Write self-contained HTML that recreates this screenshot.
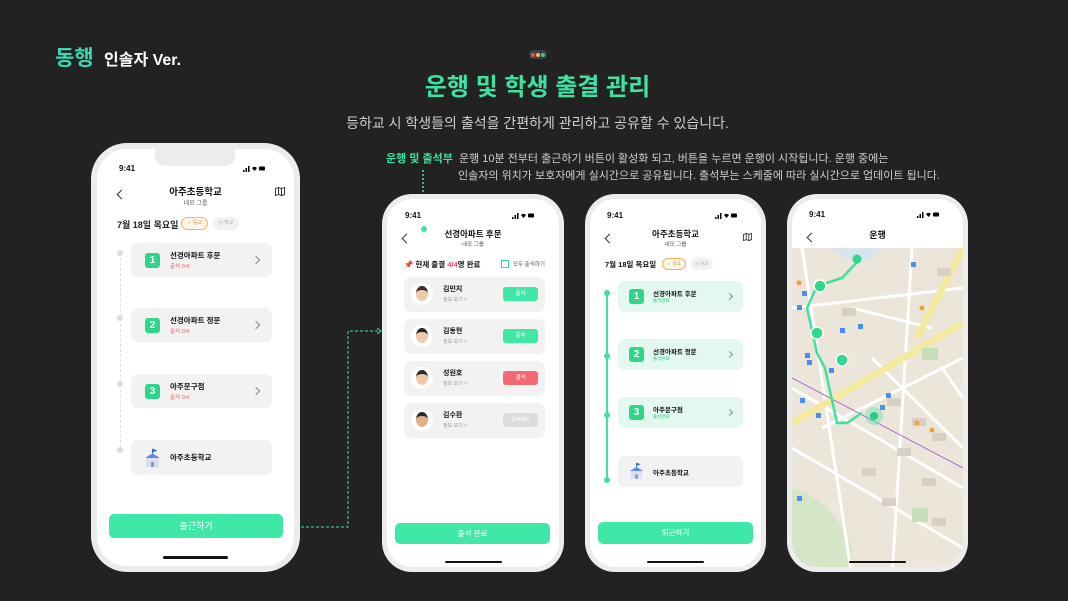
<!DOCTYPE html>
<html><head><meta charset="utf-8">
<style>
*{margin:0;padding:0;box-sizing:border-box}
body{width:1068px;height:601px;background:#222222;font-family:"Liberation Sans","Noto Sans CJK KR",sans-serif;position:relative;overflow:hidden;color:#111}
.abs{position:absolute}
.phone{position:absolute;background:#ececec;border-radius:30px;padding:5px}
.scr{position:relative;width:100%;height:100%;background:#fff;border-radius:25px;overflow:hidden}
.t{position:absolute;white-space:nowrap}
.card{position:absolute;background:#f2f2f2;border-radius:7px}
.num{position:absolute;width:15px;height:15px;border-radius:3px;background:#2fd68a;color:#fff;font-size:10px;font-weight:bold;text-align:center;line-height:15px}
.chev{position:absolute;width:6px;height:6px;border-right:1.2px solid #888;border-top:1.2px solid #888;transform:rotate(45deg)}
.back{position:absolute;width:7px;height:7px;border-left:1.3px solid #333;border-bottom:1.3px solid #333;transform:rotate(45deg)}
.btn{position:absolute;background:#40e8a8;border-radius:5px;color:#fff;text-align:center}
.home{position:absolute;height:3px;background:#111;border-radius:2px}
.status{position:absolute;font-size:8px;font-weight:bold}
.sig{position:absolute;width:22px;height:7px}
</style></head><body>

<div class="t" style="left:55px;top:42px;font-size:21px;font-weight:bold;color:#3fd6b4;">동행</div>
<div class="t" style="left:104px;top:46px;font-size:16px;font-weight:bold;color:#fff;">인솔자 Ver.</div>

<div class="abs" style="left:529px;top:50px;width:18px;height:9px;background:#3a3f48;border-radius:4px"></div>
<div class="abs" style="left:531px;top:52.5px;width:4px;height:4px;background:#e84c4c;border-radius:50%"></div>
<div class="abs" style="left:536px;top:52.5px;width:4px;height:4px;background:#f0c040;border-radius:50%"></div>
<div class="abs" style="left:541px;top:52.5px;width:4px;height:4px;background:#40d080;border-radius:50%"></div>

<div class="t" style="left:0;width:1075px;text-align:center;top:67px;font-size:24px;font-weight:bold;color:#3fe3a0;">운행 및 학생 출결 관리</div>
<div class="t" style="left:0;width:1075px;text-align:center;top:113px;font-size:14px;color:#cfcfcf;">등하교 시 학생들의 출석을 간편하게 관리하고 공유할 수 있습니다.</div>
<div class="t" style="left:386px;top:150px;font-size:11px;color:#cfcfcf;"><b style="color:#3fe3a0">운행 및 출석부</b>&nbsp; 운행 10분 전부터 출근하기 버튼이 활성화 되고, 버튼을 누르면 운행이 시작됩니다. 운행 중에는</div>
<div class="t" style="left:458px;top:167px;font-size:11px;color:#cfcfcf;">인솔자의 위치가 보호자에게 실시간으로 공유됩니다. 출석부는 스케줄에 따라 실시간으로 업데이트 됩니다.</div>

<!-- connectors -->
<svg class="abs" style="left:0;top:0" width="1068" height="601">
<path d="M286 527 H348 V331 H380" fill="none" stroke="#3fe3a0" stroke-width="1" stroke-dasharray="3 2"/>
<path d="M377 328 L381 331 L377 334" fill="none" stroke="#3fe3a0" stroke-width="1"/>
<path d="M423 170 V229" fill="none" stroke="#3fe3a0" stroke-width="1.5" stroke-dasharray="2 2"/>
</svg>

<!-- PHONE 1 -->
<div class="phone" style="left:91px;top:143px;width:209px;height:429px;border-radius:36px;padding:6px">
<div class="scr" style="border-radius:30px">
 <div class="abs" style="left:58px;top:0;width:80px;height:17px;background:#ececec;border-radius:0 0 10px 10px"></div>
 <div class="status" style="left:22px;top:15px">9:41</div>
 <svg class="sig" style="left:146px;top:16px" viewBox="0 0 22 7"><rect x="0" y="5" width="1.5" height="2"/><rect x="2.5" y="3" width="1.5" height="4"/><rect x="5" y="1" width="1.5" height="6"/><path d="M9 3 Q11.5 0.5 14 3 L11.5 6Z"/><rect x="16" y="1.5" width="6" height="4" rx="1"/></svg>
 <div class="back" style="left:21px;top:42px"></div>
 <div class="t" style="left:0;width:197px;text-align:center;top:35px;font-size:9.5px;font-weight:bold">아주초등학교</div>
 <div class="t" style="left:0;width:197px;text-align:center;top:49px;font-size:6px;color:#555">네모 그룹</div>
 <svg class="abs" style="left:178px;top:38px" width="10" height="9" viewBox="0 0 10 9"><path d="M0.5 1.5 L3.5 0.5 L6.5 1.5 L9.5 0.5 V7.5 L6.5 8.5 L3.5 7.5 L0.5 8.5Z M3.5 0.5V7.5 M6.5 1.5V8.5" fill="none" stroke="#222" stroke-width="0.9"/></svg>
 <div class="t" style="left:20px;top:69px;font-size:9px;font-weight:bold;color:#222">7월 18일 목요일</div>
 <div class="abs" style="left:84px;top:68px;width:27px;height:13px;border:1px solid #f0b060;border-radius:7px;background:#fff5e8;font-size:5px;color:#e09030;text-align:center;line-height:11px">☼ 등교</div>
 <div class="abs" style="left:116px;top:68px;width:26px;height:13px;border-radius:7px;background:#f2f2f2;font-size:5px;color:#aaa;text-align:center;line-height:13px">◷ 하교</div>
 <div class="abs" style="left:23px;top:104px;height:200px;border-left:1px dashed #ddd"></div>
 <div class="abs" style="left:20px;top:101px;width:6px;height:6px;border-radius:50%;background:#ddd"></div>
 <div class="abs" style="left:20px;top:166px;width:6px;height:6px;border-radius:50%;background:#ddd"></div>
 <div class="abs" style="left:20px;top:232px;width:6px;height:6px;border-radius:50%;background:#ddd"></div>
 <div class="abs" style="left:20px;top:298px;width:6px;height:6px;border-radius:50%;background:#ddd"></div>
 <div class="card" style="left:34px;top:94px;width:141px;height:34px"><div class="num" style="left:14px;top:10px">1</div><div class="t" style="left:39px;top:7px;font-size:7.5px;font-weight:bold">선경아파트 후문</div><div class="t" style="left:39px;top:19px;font-size:5.5px;color:#f06070">출석 0/4</div><div class="chev" style="left:122px;top:14px"></div></div>
 <div class="card" style="left:34px;top:159px;width:141px;height:34px"><div class="num" style="left:14px;top:10px">2</div><div class="t" style="left:39px;top:7px;font-size:7.5px;font-weight:bold">선경아파트 정문</div><div class="t" style="left:39px;top:19px;font-size:5.5px;color:#f06070">출석 0/4</div><div class="chev" style="left:122px;top:14px"></div></div>
 <div class="card" style="left:34px;top:225px;width:141px;height:34px"><div class="num" style="left:14px;top:10px">3</div><div class="t" style="left:39px;top:7px;font-size:7.5px;font-weight:bold">아주문구점</div><div class="t" style="left:39px;top:19px;font-size:5.5px;color:#f06070">출석 0/4</div><div class="chev" style="left:122px;top:14px"></div></div>
 <div class="card" style="left:34px;top:291px;width:141px;height:35px">
  <svg class="abs" style="left:13px;top:8px" width="17" height="19" viewBox="0 0 17 19"><path d="M8.5 1V6 M8.5 1 L12 2.5 L8.5 4" stroke="#3a6fd8" fill="#3a6fd8" stroke-width="1"/><path d="M1 10 L8.5 5.5 L16 10Z" fill="#5a8ae8"/><rect x="2" y="10" width="13" height="9" fill="#d8e0f0"/><rect x="7" y="14" width="3" height="5" fill="#8899bb"/></svg>
  <div class="t" style="left:39px;top:12px;font-size:7.5px;font-weight:bold">아주초등학교</div></div>
 <div class="btn" style="left:12px;top:365px;width:174px;height:24px;font-size:9px;line-height:24px">출근하기</div>
 <div class="home" style="left:66px;top:407px;width:65px"></div>
</div></div>

<!-- PHONE 2 -->
<div class="phone" style="left:382px;top:194px;width:182px;height:378px">
<div class="scr">
 <div class="status" style="left:18px;top:12px">9:41</div>
 <svg class="sig" style="left:125px;top:13px" viewBox="0 0 22 7"><rect x="0" y="5" width="1.5" height="2"/><rect x="2.5" y="3" width="1.5" height="4"/><rect x="5" y="1" width="1.5" height="6"/><path d="M9 3 Q11.5 0.5 14 3 L11.5 6Z"/><rect x="16" y="1.5" width="6" height="4" rx="1"/></svg>
 <div class="abs" style="left:34px;top:27px;width:6px;height:6px;border-radius:50%;background:#3fe3a0"></div>
 <div class="back" style="left:16px;top:36px"></div>
 <div class="t" style="left:0;width:172px;text-align:center;top:29px;font-size:8.5px;font-weight:bold">선경아파트 후문</div>
 <div class="t" style="left:0;width:172px;text-align:center;top:41px;font-size:5.5px;color:#555">네모 그룹</div>
 <div class="t" style="left:17px;top:60px;font-size:7.5px;font-weight:bold">📌 현재 출결 <span style="color:#f05060">4/4</span>명 완료</div>
 <div class="abs" style="left:114px;top:61px;width:8px;height:8px;border:1px solid #3fd0a0"></div>
 <div class="t" style="left:126px;top:61px;font-size:5.5px;color:#555">모두 출석하기</div>
 <div class="card" style="left:17px;top:78px;width:141px;height:35px"><div class="abs" style="left:7px;top:6px;width:22px;height:22px;border-radius:50%;background:#fff"><div class="abs" style="left:5px;top:3px;width:12px;height:15px;border-radius:50%;background:#f0c8a8;border-top:4px solid #3a2a20"></div></div><div class="t" style="left:39px;top:7px;font-size:7px;font-weight:bold">김민지</div><div class="t" style="left:39px;top:19px;font-size:5px;color:#999">정보 보기 &gt;</div><div class="btn" style="left:99px;top:10px;width:35px;height:14px;font-size:5.5px;line-height:14px;border-radius:3px">출석</div></div>
 <div class="card" style="left:17px;top:120px;width:141px;height:35px"><div class="abs" style="left:7px;top:6px;width:22px;height:22px;border-radius:50%;background:#fff"><div class="abs" style="left:5px;top:3px;width:12px;height:15px;border-radius:50%;background:#f0c8a8;border-top:4px solid #2a2a20"></div></div><div class="t" style="left:39px;top:7px;font-size:7px;font-weight:bold">김동현</div><div class="t" style="left:39px;top:19px;font-size:5px;color:#999">정보 보기 &gt;</div><div class="btn" style="left:99px;top:10px;width:35px;height:14px;font-size:5.5px;line-height:14px;border-radius:3px">출석</div></div>
 <div class="card" style="left:17px;top:162px;width:141px;height:35px"><div class="abs" style="left:7px;top:6px;width:22px;height:22px;border-radius:50%;background:#fff"><div class="abs" style="left:5px;top:3px;width:12px;height:15px;border-radius:50%;background:#f0c8a8;border-top:4px solid #2a2a20"></div></div><div class="t" style="left:39px;top:7px;font-size:7px;font-weight:bold">성원호</div><div class="t" style="left:39px;top:19px;font-size:5px;color:#999">정보 보기 &gt;</div><div class="btn" style="left:99px;top:10px;width:35px;height:14px;font-size:5.5px;line-height:14px;border-radius:3px;background:#f36a72">결석</div></div>
 <div class="card" style="left:17px;top:204px;width:141px;height:35px"><div class="abs" style="left:7px;top:6px;width:22px;height:22px;border-radius:50%;background:#fff"><div class="abs" style="left:5px;top:3px;width:12px;height:15px;border-radius:50%;background:#e0b088;border-top:4px solid #2a2a20"></div></div><div class="t" style="left:39px;top:7px;font-size:7px;font-weight:bold">김수환</div><div class="t" style="left:39px;top:19px;font-size:5px;color:#999">정보 보기 &gt;</div><div class="btn" style="left:99px;top:10px;width:35px;height:14px;font-size:5px;line-height:14px;border-radius:3px;background:#dcdcdc">결석해요</div></div>
 <div class="btn" style="left:8px;top:324px;width:155px;height:21px;font-size:7.5px;line-height:21px">출석 완료</div>
 <div class="home" style="left:58px;top:362px;width:57px;height:2px"></div>
</div></div>

<!-- PHONE 3 -->
<div class="phone" style="left:585px;top:194px;width:181px;height:378px">
<div class="scr">
 <div class="status" style="left:17px;top:12px">9:41</div>
 <svg class="sig" style="left:125px;top:13px" viewBox="0 0 22 7"><rect x="0" y="5" width="1.5" height="2"/><rect x="2.5" y="3" width="1.5" height="4"/><rect x="5" y="1" width="1.5" height="6"/><path d="M9 3 Q11.5 0.5 14 3 L11.5 6Z"/><rect x="16" y="1.5" width="6" height="4" rx="1"/></svg>
 <div class="back" style="left:16px;top:36px"></div>
 <div class="t" style="left:0;width:171px;text-align:center;top:29px;font-size:8.5px;font-weight:bold">아주초등학교</div>
 <div class="t" style="left:0;width:171px;text-align:center;top:41px;font-size:5.5px;color:#555">네모 그룹</div>
 <svg class="abs" style="left:153px;top:34px" width="9" height="8" viewBox="0 0 10 9"><path d="M0.5 1.5 L3.5 0.5 L6.5 1.5 L9.5 0.5 V7.5 L6.5 8.5 L3.5 7.5 L0.5 8.5Z M3.5 0.5V7.5 M6.5 1.5V8.5" fill="none" stroke="#222" stroke-width="0.9"/></svg>
 <div class="t" style="left:15px;top:60px;font-size:7.5px;font-weight:bold">7월 18일 목요일</div>
 <div class="abs" style="left:72px;top:59px;width:24px;height:12px;border:1px solid #f0b060;border-radius:6px;background:#fff5e8;font-size:4.5px;color:#e09030;text-align:center;line-height:10px">☼ 등교</div>
 <div class="abs" style="left:100px;top:59px;width:23px;height:12px;border-radius:6px;background:#f2f2f2;font-size:4.5px;color:#aaa;text-align:center;line-height:12px">◷ 하교</div>
 <div class="abs" style="left:16px;top:93px;width:2px;height:189px;background:#40e0a0"></div>
 <div class="abs" style="left:14px;top:91px;width:6px;height:6px;border-radius:50%;background:#40e0a0"></div>
 <div class="abs" style="left:14px;top:154px;width:6px;height:6px;border-radius:50%;background:#40e0a0"></div>
 <div class="abs" style="left:14px;top:213px;width:6px;height:6px;border-radius:50%;background:#40e0a0"></div>
 <div class="abs" style="left:14px;top:278px;width:6px;height:6px;border-radius:50%;background:#40e0a0"></div>
 <div class="card" style="left:28px;top:82px;width:125px;height:31px;background:#e3f9f0"><div class="num" style="left:11px;top:8px">1</div><div class="t" style="left:35px;top:7px;font-size:6.5px;font-weight:bold">선경아파트 후문</div><div class="t" style="left:35px;top:17px;font-size:4.5px;color:#30c080">출석완료</div><div class="chev" style="left:109px;top:13px;width:5px;height:5px"></div></div>
 <div class="card" style="left:28px;top:140px;width:125px;height:31px;background:#e3f9f0"><div class="num" style="left:11px;top:8px">2</div><div class="t" style="left:35px;top:7px;font-size:6.5px;font-weight:bold">선경아파트 정문</div><div class="t" style="left:35px;top:17px;font-size:4.5px;color:#30c080">출석완료</div><div class="chev" style="left:109px;top:13px;width:5px;height:5px"></div></div>
 <div class="card" style="left:28px;top:198px;width:125px;height:31px;background:#e3f9f0"><div class="num" style="left:11px;top:8px">3</div><div class="t" style="left:35px;top:7px;font-size:6.5px;font-weight:bold">아주문구점</div><div class="t" style="left:35px;top:17px;font-size:4.5px;color:#30c080">출석완료</div><div class="chev" style="left:109px;top:13px;width:5px;height:5px"></div></div>
 <div class="card" style="left:28px;top:257px;width:125px;height:31px">
  <svg class="abs" style="left:11px;top:6px" width="15" height="17" viewBox="0 0 17 19"><path d="M8.5 1V6 M8.5 1 L12 2.5 L8.5 4" stroke="#3a6fd8" fill="#3a6fd8" stroke-width="1"/><path d="M1 10 L8.5 5.5 L16 10Z" fill="#5a8ae8"/><rect x="2" y="10" width="13" height="9" fill="#d8e0f0"/><rect x="7" y="14" width="3" height="5" fill="#8899bb"/></svg>
  <div class="t" style="left:35px;top:11px;font-size:6.5px;font-weight:bold">아주초등학교</div></div>
 <div class="btn" style="left:8px;top:323px;width:155px;height:22px;font-size:7.5px;line-height:22px">퇴근하기</div>
 <div class="home" style="left:57px;top:362px;width:57px;height:2px"></div>
</div></div>

<!-- PHONE 4 -->
<div class="phone" style="left:787px;top:194px;width:181px;height:378px">
<div class="scr">
 <div class="status" style="left:17px;top:11px">9:41</div>
 <svg class="sig" style="left:125px;top:12px" viewBox="0 0 22 7"><rect x="0" y="5" width="1.5" height="2"/><rect x="2.5" y="3" width="1.5" height="4"/><rect x="5" y="1" width="1.5" height="6"/><path d="M9 3 Q11.5 0.5 14 3 L11.5 6Z"/><rect x="16" y="1.5" width="6" height="4" rx="1"/></svg>
 <div class="back" style="left:16px;top:35px"></div>
 <div class="t" style="left:0;width:171px;text-align:center;top:29px;font-size:9px;font-weight:bold">운행</div>
 <svg class="abs" style="left:0;top:49px" width="171" height="330" viewBox="0 0 171 330">
  <rect width="171" height="330" fill="#ece6da"/>
  <path d="M0 240 Q40 250 60 300 L60 330 L0 330Z" fill="#d5e6c8"/>
  <path d="M40 0 Q60 20 80 10 L90 0Z" fill="#d8e4ee"/>
  <g stroke="#fff" stroke-width="3" fill="none">
   <path d="M0 60 L171 40"/><path d="M10 0 L60 330"/><path d="M0 140 L171 240"/><path d="M80 110 L171 200"/><path d="M30 180 L171 110"/><path d="M120 0 L100 330"/><path d="M0 200 L171 300"/><path d="M60 60 L140 80"/><path d="M150 120 L171 150"/>
  </g>
  <path d="M0 175 L171 75 M171 0 L125 90" stroke="#f3eaa0" stroke-width="7" fill="none"/>
  <g fill="#d8d0c4"><rect x="95" y="150" width="14" height="8"/><rect x="120" y="170" width="14" height="8"/><rect x="140" y="185" width="14" height="8"/><rect x="105" y="200" width="14" height="8"/><rect x="130" y="230" width="14" height="8"/><rect x="90" y="250" width="14" height="8"/><rect x="140" y="270" width="14" height="8"/><rect x="70" y="220" width="14" height="8"/><rect x="50" y="60" width="14" height="8"/><rect x="145" y="20" width="14" height="8"/></g>
  <g fill="#c5dfb8"><rect x="130" y="100" width="16" height="12"/><rect x="120" y="260" width="16" height="14"/></g>
  <path d="M0 130 L171 220" stroke="#9b50d0" stroke-width="0.8" fill="none"/>
  <path d="M65 14 L50 30 L25 38 L15 60 L25 105 L33 120 L45 175 L55 175 L70 165" stroke="#40e0a0" stroke-width="2.5" fill="none"/>
  <circle cx="65" cy="11" r="4.5" fill="#30d890"/>
  <circle cx="28" cy="38" r="6" fill="#30d890" stroke="#fff" stroke-width="1.5"/>
  <circle cx="25" cy="85" r="6" fill="#30d890" stroke="#fff" stroke-width="1.5"/>
  <circle cx="50" cy="112" r="6" fill="#30d890" stroke="#fff" stroke-width="1.5"/>
  <circle cx="82" cy="168" r="9" fill="#40e0a0" opacity="0.35"/><circle cx="82" cy="168" r="4" fill="#20d080"/>
  <g fill="#4a8ef0"><rect x="119" y="14" width="5" height="5"/><rect x="10" y="43" width="5" height="5"/><rect x="5" y="57" width="5" height="5"/><rect x="66" y="76" width="5" height="5"/><rect x="48" y="80" width="5" height="5"/><rect x="13" y="105" width="5" height="5"/><rect x="15" y="112" width="5" height="5"/><rect x="37" y="120" width="5" height="5"/><rect x="8" y="150" width="5" height="5"/><rect x="24" y="165" width="5" height="5"/><rect x="94" y="145" width="5" height="5"/><rect x="88" y="157" width="5" height="5"/><rect x="5" y="248" width="5" height="5"/></g>
  <g fill="#f0a030"><circle cx="7" cy="35" r="2.5"/><circle cx="130" cy="60" r="2.5"/><circle cx="125" cy="175" r="2.5"/><circle cx="140" cy="182" r="2.5"/></g>
 </svg>
 <div class="home" style="left:57px;top:362px;width:57px;height:2px"></div>
</div></div>

</body></html>
